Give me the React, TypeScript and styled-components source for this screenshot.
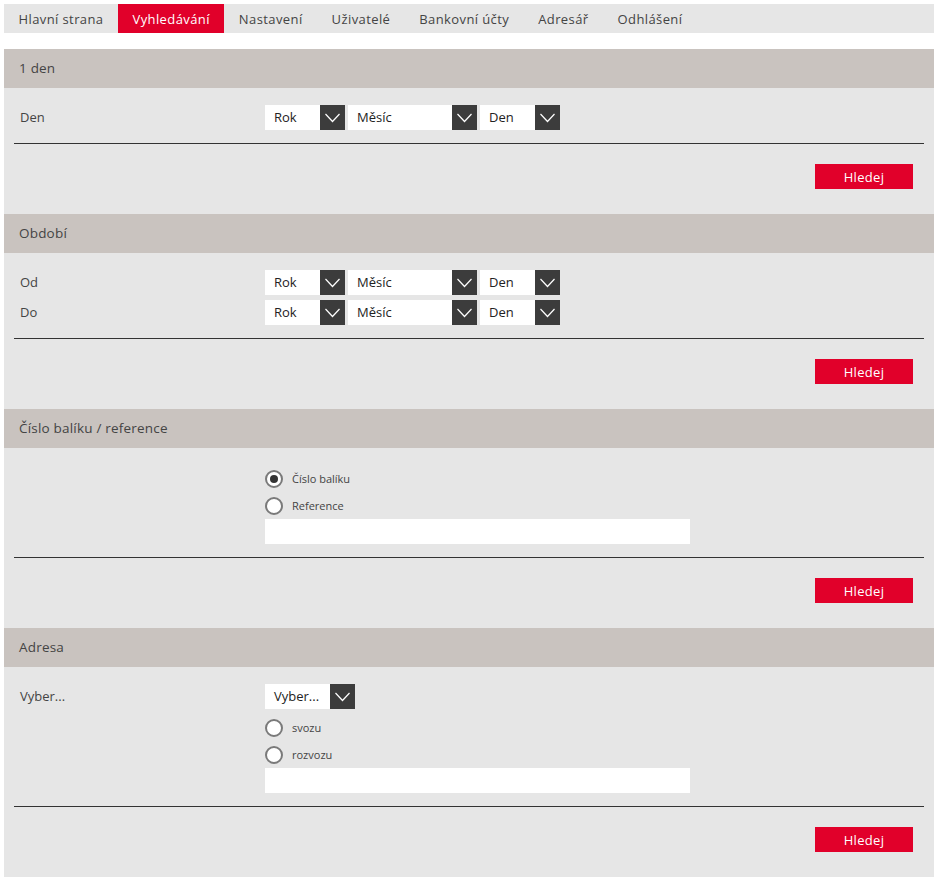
import React from 'react';
import styled, { createGlobalStyle } from 'styled-components';

const GlobalStyle = createGlobalStyle`
  body {
    margin: 4px;
    background: #ffffff;
    font-family: "Open Sans", "DejaVu Sans", sans-serif;
    color: #444;
  }
`;

const Nav = styled.nav`
  display: flex;
  height: 29px;
  background: #e6e6e6;
  margin-bottom: 16px;
`;

const Tab = styled.div<{ $active?: boolean }>`
  display: flex;
  align-items: center;
  padding: 0 14.5px;
  font-size: 13px;
  letter-spacing: 0.4px;
  color: ${p => (p.$active ? '#ffffff' : '#444')};
  background: ${p => (p.$active ? '#e1002a' : 'transparent')};
`;

const SectionHeader = styled.div`
  height: 39px;
  display: flex;
  align-items: center;
  padding-left: 15px;
  padding-bottom: 1px;
  box-sizing: border-box;
  background: #c9c3bf;
  font-size: 13.5px;
  letter-spacing: 0.2px;
  color: #444;
`;

const SectionBody = styled.div`
  background: #e6e6e6;
  padding: 17px 10px 25px;
`;

const FormRow = styled.div`
  display: flex;
  align-items: flex-start;
`;

const Label = styled.div`
  width: 245px;
  padding-left: 6px;
  line-height: 25px;
  font-size: 13px;
  color: #444;
  flex-shrink: 0;
`;

const Controls = styled.div<{ $gap?: number }>`
  display: flex;
  flex-direction: column;
  gap: ${p => p.$gap ?? 0}px;
`;

const SelectGroup = styled.div`
  display: flex;
  gap: 3px;
`;

const Select = styled.div`
  display: flex;
  height: 25px;
`;

const SelectValue = styled.div<{ $width: number }>`
  width: ${p => p.$width}px;
  background: #ffffff;
  box-sizing: border-box;
  padding-left: 9px;
  line-height: 25px;
  font-size: 13px;
  color: #222;
`;

const SelectArrow = styled.div`
  width: 25px;
  height: 25px;
  background: #3c3c3c;
  display: flex;
  align-items: center;
  justify-content: center;
`;

const RadioList = styled.div`
  display: flex;
  flex-direction: column;
`;

const RadioRow = styled.label`
  display: flex;
  align-items: center;
  height: 27px;
  gap: 9px;
  font-size: 11px;
  color: #444;
`;

const RadioCircle = styled.span<{ $checked?: boolean }>`
  width: 18px;
  height: 18px;
  box-sizing: border-box;
  border-radius: 50%;
  border: 2px solid #7a7a7a;
  background: #ffffff;
  display: flex;
  align-items: center;
  justify-content: center;

  &::after {
    content: '';
    display: ${p => (p.$checked ? 'block' : 'none')};
    width: 8px;
    height: 8px;
    border-radius: 50%;
    background: #333;
  }
`;

const TextInput = styled.div`
  width: 425px;
  height: 25px;
  background: #ffffff;
`;

const Divider = styled.div`
  height: 1px;
  background: #333;
  margin: 13px 0 20px;
`;

const ButtonBar = styled.div`
  display: flex;
  justify-content: flex-end;
  padding-right: 11px;
`;

const SearchButton = styled.button`
  width: 98px;
  height: 25px;
  border: none;
  background: #e1002a;
  color: #ffffff;
  font-family: inherit;
  font-size: 13px;
  letter-spacing: 0.3px;
  padding: 0;
`;

const Chevron = () => (
  <svg width="25" height="25" viewBox="0 0 25 25">
    <polyline points="5.5,9 12.5,16.5 19.5,9" fill="none" stroke="#ffffff" strokeWidth="1.2" />
  </svg>
);

const Dropdown: React.FC<{ value: string; width: number }> = ({ value, width }) => (
  <Select>
    <SelectValue $width={width}>{value}</SelectValue>
    <SelectArrow>
      <Chevron />
    </SelectArrow>
  </Select>
);

const DateSelect = () => (
  <SelectGroup>
    <Dropdown value="Rok" width={55} />
    <Dropdown value="Měsíc" width={104} />
    <Dropdown value="Den" width={55} />
  </SelectGroup>
);

const Radio: React.FC<{ label: string; checked?: boolean }> = ({ label, checked }) => (
  <RadioRow>
    <RadioCircle $checked={checked} />
    {label}
  </RadioRow>
);

const Footer = () => (
  <>
    <Divider />
    <ButtonBar>
      <SearchButton>Hledej</SearchButton>
    </ButtonBar>
  </>
);

const tabs = ['Hlavní strana', 'Vyhledávání', 'Nastavení', 'Uživatelé', 'Bankovní účty', 'Adresář', 'Odhlášení'];

const App: React.FC = () => (
  <>
    <GlobalStyle />
    <Nav>
      {tabs.map(t => (
        <Tab key={t} $active={t === 'Vyhledávání'}>
          {t}
        </Tab>
      ))}
    </Nav>

    <SectionHeader>1 den</SectionHeader>
    <SectionBody>
      <FormRow>
        <Label>Den</Label>
        <DateSelect />
      </FormRow>
      <Footer />
    </SectionBody>

    <SectionHeader>Období</SectionHeader>
    <SectionBody>
      <Controls $gap={5}>
        <FormRow>
          <Label>Od</Label>
          <DateSelect />
        </FormRow>
        <FormRow>
          <Label>Do</Label>
          <DateSelect />
        </FormRow>
      </Controls>
      <Footer />
    </SectionBody>

    <SectionHeader>Číslo balíku / reference</SectionHeader>
    <SectionBody>
      <FormRow>
        <Label />
        <Controls>
          <RadioList>
            <Radio label="Číslo balíku" checked />
            <Radio label="Reference" />
          </RadioList>
          <TextInput />
        </Controls>
      </FormRow>
      <Footer />
    </SectionBody>

    <SectionHeader>Adresa</SectionHeader>
    <SectionBody>
      <FormRow>
        <Label>Vyber...</Label>
        <Controls $gap={5}>
          <Dropdown value="Vyber..." width={65} />
          <Controls>
            <RadioList>
              <Radio label="svozu" />
              <Radio label="rozvozu" />
            </RadioList>
            <TextInput />
          </Controls>
        </Controls>
      </FormRow>
      <Footer />
    </SectionBody>
  </>
);

export default App;
